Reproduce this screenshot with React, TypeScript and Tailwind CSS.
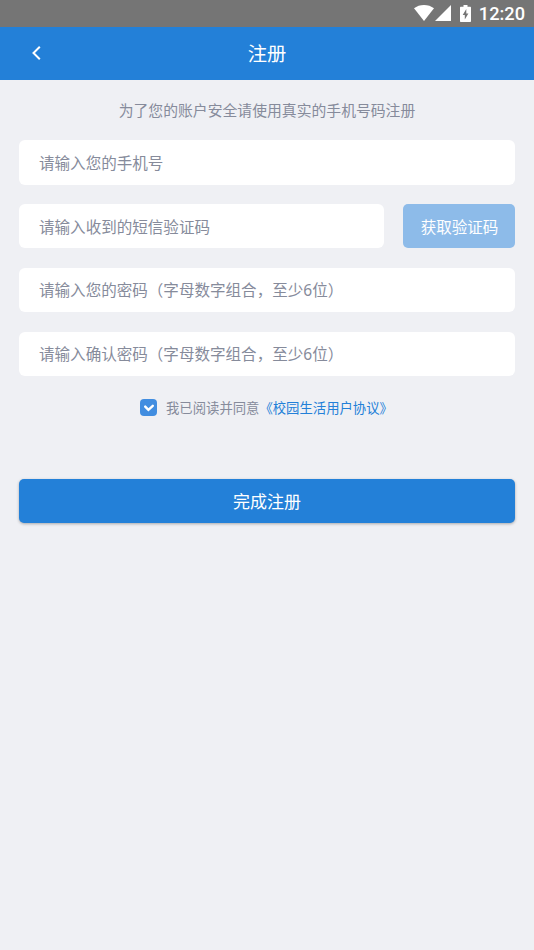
const passwordFields = [
  { id: "password", placeholder: "请输入您的密码（字母数字组合，至少6位）" },
  { id: "confirm", placeholder: "请输入确认密码（字母数字组合，至少6位）" }
];

const inputClass =
  "block h-[44.2px] w-full min-w-0 rounded-md bg-white px-5 font-['Noto_Sans','Noto_Sans_CJK_SC',sans-serif] text-[15.55px] text-[#868b9b] placeholder:text-[#868b9b] placeholder:opacity-100 outline-none";

function StatusBar() {
  return (
    <div className="flex h-[27px] items-center justify-end bg-[#757575] pr-[9px] text-white">
      <svg viewBox="0 0 20 16" className="mr-px mb-px h-4 w-5" fill="currentColor">
        <path d="M0 3.3C2.8 1.2 6.2 0 10 0s7.200 1.200 10 3.300L10 16z" />
      </svg>
      <svg viewBox="0 0 16 16" className="mr-[9px] mb-px h-4 w-4" fill="currentColor">
        <path d="M16 0v16H0z" />
      </svg>
      <svg viewBox="0 0 11 17" className="mr-2 mb-px h-[17px] w-[11px]" fill="currentColor">
        <path
          fillRule="evenodd"
          d="M3.500 0h4v1.700H10c.6 0 1 .4 1 1V16c0 .6-.4 1-1 1H1c-.6 0-1-.4-1-1V2.700c0-.6.4-1 1-1h2.500zM6.300 4L2.700 10h2.100v4.500L8.400 8.500H6.300z"
        />
      </svg>
      <span className="font-[Roboto] text-[18.2px] leading-[27px] font-medium">12:20</span>
    </div>
  );
}

export default function App() {
  return (
    <div className="min-h-screen bg-[#eff0f4] font-['Noto_Sans_CJK_SC',sans-serif]">
      <StatusBar />

      <header className="grid h-[53px] grid-cols-[1fr_auto_1fr] items-center bg-[#2380d8] text-white">
        <button type="button" aria-label="返回" className="mb-px ml-[31px] w-[11px]">
          <svg viewBox="0 0 11 16" className="h-4 w-[11px]" fill="none">
            <path d="M8.800 1.700L2.500 8l6.300 6.300" stroke="currentColor" strokeWidth="2" />
          </svg>
        </button>
        <h1 className="text-[19.3px] leading-none">注册</h1>
      </header>

      <main className="px-[19px]">
        <p className="h-[60.4px] text-center text-[14.84px] leading-[60px] text-[#868b9b]">
          为了您的账户安全请使用真实的手机号码注册
        </p>

        <form className="flex flex-col gap-[19.6px]">
          <input className={`${inputClass} pt-px`} type="tel" placeholder="请输入您的手机号" />
          <div className="flex gap-[19px]">
            <input className={`${inputClass} pt-px`} placeholder="请输入收到的短信验证码" />
            <button
              type="button"
              className="h-[44.2px] w-[112px] shrink-0 rounded-[5px] bg-[#8dbbe9] pl-px text-[15.55px] text-white"
            >
              获取验证码
            </button>
          </div>
          {passwordFields.map((f) => (
            <input key={f.id} className={inputClass} placeholder={f.placeholder} />
          ))}
        </form>

        <div className="mt-[22px] flex h-5 items-center pl-[121px] text-[13.35px] leading-5">
          <span className="mr-[9px] flex size-[17px] items-center justify-center rounded-[4px] bg-[#418de0]">
            <svg viewBox="0 0 17 17" className="size-[17px]" fill="none">
              <path
                d="M5.200 7.600l3.200 3.300 4.400-4.100"
                stroke="white"
                strokeWidth="2.4"
                strokeLinecap="round"
              />
            </svg>
          </span>
          <span className="text-[#868b9b]">我已阅读并同意</span>
          <a href="#agreement" className="text-[#2380d8]">
            《校园生活用户协议》
          </a>
        </div>

        <button
          type="button"
          className="mt-[61px] block h-11 w-full rounded-[5px] bg-[#2380d8] text-[17px] text-white shadow-[0_1px_3px_rgba(0,0,0,0.3)]"
        >
          完成注册
        </button>
      </main>
    </div>
  );
}
